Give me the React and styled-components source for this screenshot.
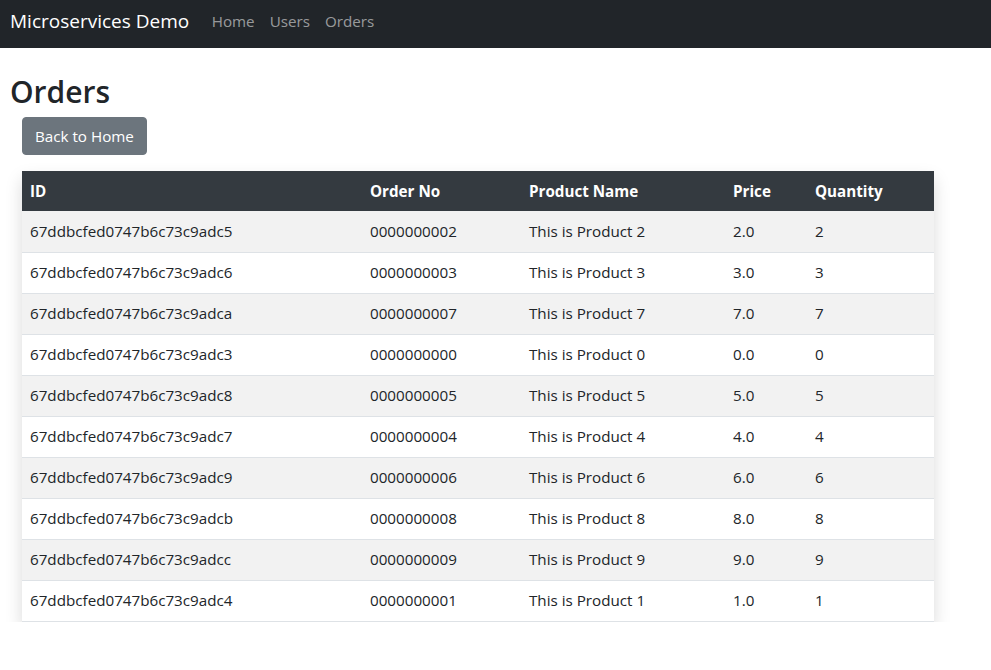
import React from "react";
import styled, { createGlobalStyle } from "styled-components";

const Global = createGlobalStyle`
  html, body { margin: 0; padding: 0; background: #fff; }
  body {
    font-family: "Open Sans", "Noto Sans", "Liberation Sans", sans-serif;
    font-size: 15.2px;
    line-height: 1.5;
    color: #212529;
  }
  * { box-sizing: border-box; }
`;

const Navbar = styled.nav`
  height: 48px;
  background: #212529;
  display: flex;
  align-items: center;
  padding: 0 10px 6px;
`;

const Brand = styled.a`
  font-size: 19px;
  color: #fff;
  text-decoration: none;
  margin-right: 15px;
  line-height: 30px;
`;

const NavList = styled.ul`
  display: flex;
  list-style: none;
  margin: 0;
  padding: 0;
`;

const NavLink = styled.a`
  display: block;
  padding: 0 7.5px;
  color: rgba(255, 255, 255, 0.55);
  text-decoration: none;
  font-size: 15.2px;
`;

const Main = styled.main`
  padding: 0 10px;
`;

const Title = styled.h1`
  font-size: 30px;
  font-weight: 600;
  line-height: 1.2;
  margin: 26px 0 7px;
`;

const Content = styled.div`
  padding: 0 57px 0 12px;
`;

const Button = styled.button`
  font-family: inherit;
  font-size: 15.2px;
  line-height: 24px;
  padding: 6px 12px;
  color: #fff;
  background: #6c757d;
  border: 1px solid #6c757d;
  border-radius: 4px;
  cursor: pointer;
`;

const Table = styled.table`
  width: 912px;
  margin-top: 16px;
  border-collapse: collapse;
  box-shadow: 0 0.5rem 1rem rgba(0, 0, 0, 0.15);
`;

const Th = styled.th`
  background: #343a40;
  color: #fff;
  font-weight: 700;
  text-align: left;
  padding: 8px;
  height: 40px;
  width: ${(p) => p.$w}px;
`;

const Tr = styled.tr`
  background: ${(p) => (p.$odd ? "#f2f2f2" : "#fff")};
  border-bottom: 1px solid #dee2e6;
`;

const Td = styled.td`
  padding: 8px;
  height: 41px;
`;

const cols = [
  { label: "ID", w: 340 },
  { label: "Order No", w: 159 },
  { label: "Product Name", w: 204 },
  { label: "Price", w: 82 },
  { label: "Quantity", w: 127 },
];

const ids = ["5", "6", "a", "3", "8", "7", "9", "b", "c", "4"];
const nums = [2, 3, 7, 0, 5, 4, 6, 8, 9, 1];

export default function App() {
  return (
    <>
      <Global />
      <Navbar>
        <Brand href="#">Microservices Demo</Brand>
        <NavList>
          <li><NavLink href="#">Home</NavLink></li>
          <li><NavLink href="#">Users</NavLink></li>
          <li><NavLink href="#">Orders</NavLink></li>
        </NavList>
      </Navbar>
      <Main>
        <Title>Orders</Title>
        <Content>
          <Button>Back to Home</Button>
          <Table>
            <thead>
              <tr>
                {cols.map((c) => (
                  <Th key={c.label} $w={c.w}>{c.label}</Th>
                ))}
              </tr>
            </thead>
            <tbody>
              {nums.map((n, i) => (
                <Tr key={i} $odd={i % 2 === 0}>
                  <Td>67ddbcfed0747b6c73c9adc{ids[i]}</Td>
                  <Td>{String(n).padStart(10, "0")}</Td>
                  <Td>This is Product {n}</Td>
                  <Td>{n}.0</Td>
                  <Td>{n}</Td>
                </Tr>
              ))}
            </tbody>
          </Table>
        </Content>
      </Main>
    </>
  );
}
